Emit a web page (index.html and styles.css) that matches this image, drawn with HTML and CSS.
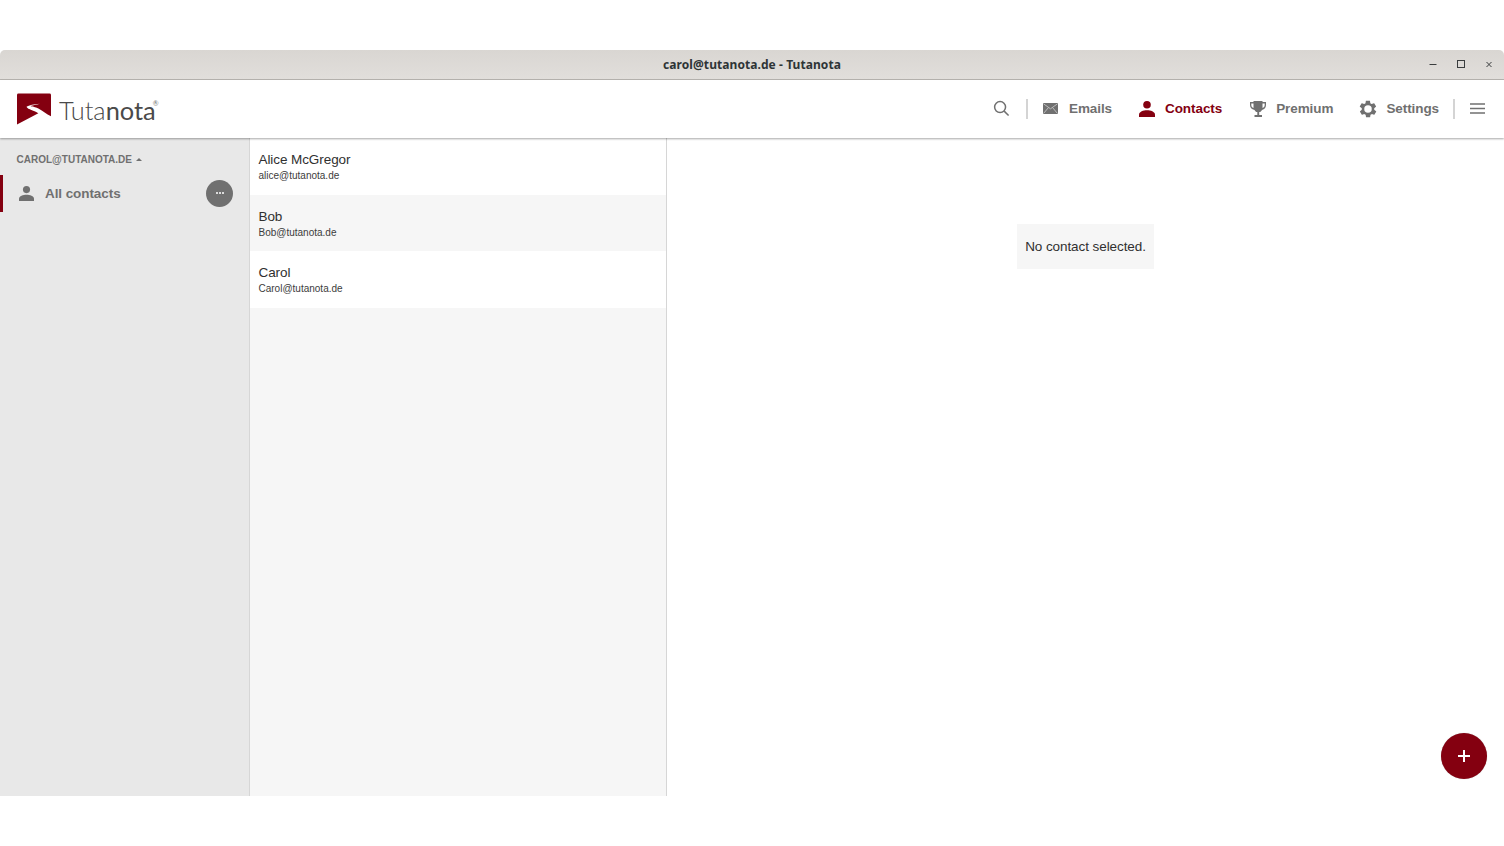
FILE: index.html
```html
<!DOCTYPE html>
<html lang="en">
<head>
<meta charset="utf-8">
<title>carol@tutanota.de - Tutanota</title>
<link rel="stylesheet" href="styles.css">
</head>
<body>
<div class="window">
  <div class="titlebar">
    <span class="title">carol@tutanota.de - Tutanota</span>
    <div class="win-controls">
      <svg class="win-icon" viewBox="0 0 10 10"><path d="M1.5 5.5h7" /></svg>
      <svg class="win-icon" viewBox="0 0 10 10"><rect x="1.5" y="1.5" width="7" height="7" /></svg>
      <svg class="win-icon" viewBox="0 0 10 10"><path d="M2.5 3l5 5M7.5 3l-5 5" /></svg>
    </div>
  </div>
  <header class="topbar">
    <div class="logo">
      <svg class="logo-mark" viewBox="0 0 35 32">
        <path d="M0 1.500Q0 0 1.500 0H33.500Q35 0 35 1.500V23.500C30 21 27 18 22 15.500C19 14 15 13.500 14 13C16 12 20 11.500 23.500 10.500C18 11 12 12 10 13.500C9.500 15 13 16.500 16 17.500C19 18.500 21 19.500 22 20.500L0 32Z"/>
      </svg>
      <span class="wordmark"><span class="wm-light">Tuta</span>nota<sup class="wm-reg">®</sup></span>
    </div>
    <nav class="nav">
      <svg class="ic-search" viewBox="0 0 18 18"><circle cx="7.500" cy="7.500" r="5.800"/><path d="M11.800 11.800L16.500 16.500"/></svg>
      <span class="divider first"></span>
      <a class="nav-item n-emails"><svg class="mail-ic" viewBox="0 0 15 11"><rect class="env-fill" width="15" height="11" rx="0.500"/><path class="env-line" d="M0.500 0.800L7.500 5.800L14.500 0.800M0.500 10.500L5.500 4.500M14.500 10.500L9.500 4.500"/></svg>Emails</a>
      <a class="nav-item n-contacts active"><svg class="nav-ic person" viewBox="0 0 16 16"><circle cx="8" cy="3.800" r="3.800"/><path d="M0 16v-2.600C0 10.700 4.500 9.200 8 9.200s8 1.500 8 4.200V16z"/></svg>Contacts</a>
      <a class="nav-item n-premium"><svg class="nav-ic trophy" viewBox="0 0 16 16"><path d="M3.500 0h9v1h3.500v3c0 2.600-1.500 4.400-4 4.900-.6 1.200-1.500 1.900-2.800 2.200V14h2.800v2H4.500v-2h2.800v-2.900c-1.300-.3-2.200-1-2.800-2.200C1.500 8.400 0 6.600 0 4V1h3.500zM1.300 2.400V4c0 1.400.8 2.600 2.200 3.100V2.400zM14.700 2.400h-2.200v4.700c1.400-.5 2.200-1.700 2.200-3.100z" fill-rule="evenodd"/></svg>Premium</a>
      <a class="nav-item n-settings"><svg class="nav-ic gear" viewBox="0 0 24 24"><path d="M19.400 13c.1-.3.100-.7.100-1s0-.7-.1-1l2.100-1.600c.2-.2.200-.4.100-.6l-2-3.500c-.1-.2-.4-.3-.6-.2l-2.500 1c-.5-.4-1.100-.7-1.700-1l-.4-2.700c0-.2-.2-.4-.5-.4h-4c-.3 0-.5.200-.5.400l-.4 2.700c-.6.300-1.200.6-1.700 1l-2.500-1c-.2-.1-.5 0-.6.200l-2 3.500c-.1.200-.1.400.1.600L4.600 11c0 .3-.1.700-.1 1s0 .7.100 1l-2.100 1.600c-.2.200-.2.400-.1.600l2 3.500c.1.200.4.300.6.200l2.500-1c.5.400 1.100.7 1.700 1l.4 2.700c0 .2.200.4.500.4h4c.3 0 .5-.2.500-.4l.4-2.700c.6-.3 1.200-.6 1.700-1l2.500 1c.2.100.5 0 .6-.2l2-3.500c.1-.2.100-.4-.1-.6zM12 16.500a4.500 4.500 0 1 1 0-9 4.500 4.500 0 0 1 0 9z" fill-rule="evenodd"/></svg>Settings</a>
      <span class="divider second"></span>
      <svg class="ic-menu" viewBox="0 0 15 11"><path d="M0 1h15M0 5.500h15M0 10h15"/></svg>
    </nav>
  </header>
  <main class="content">
    <aside class="folders">
      <div class="account">CAROL@TUTANOTA.DE<span class="caret"></span></div>
      <div class="folder-row">
        <svg class="folder-ic" viewBox="0 0 16 16"><circle cx="8" cy="3.800" r="3.800"/><path d="M0 16v-2.600C0 10.700 4.500 9.200 8 9.200s8 1.500 8 4.200V16z"/></svg>
        <span class="folder-label">All contacts</span>
        <span class="more"><i></i><i></i><i></i></span>
      </div>
    </aside>
    <section class="list">
      <div class="row">
        <div class="name">Alice McGregor</div>
        <div class="mail">alice@tutanota.de</div>
      </div>
      <div class="row">
        <div class="name">Bob</div>
        <div class="mail">Bob@tutanota.de</div>
      </div>
      <div class="row">
        <div class="name">Carol</div>
        <div class="mail">Carol@tutanota.de</div>
      </div>
    </section>
    <section class="detail">
      <div class="empty">No contact selected.</div>
      <button class="fab" aria-label="New contact"><svg viewBox="0 0 14 14"><path d="M7 1v12M1 7h12"/></svg></button>
    </section>
  </main>
</div>
</body>
</html>
```
FILE: styles.css
```css
* { box-sizing: border-box; }
html, body { margin: 0; height: 100%; background: #fff; }
body { padding: 50px 0; font-family: "Liberation Sans", Arial, sans-serif; overflow: hidden; }
.window { height: 746px; display: flex; flex-direction: column; background: #fff; }

.titlebar {
  height: 30px; flex: none; position: relative;
  display: flex; align-items: center; justify-content: center;
  background: linear-gradient(#d9d6d2, #e1dedb);
  border-bottom: 1px solid #b8b5b1;
  border-radius: 5px 5px 0 0;
}
.title { font-family: "Noto Sans", "Open Sans", sans-serif; font-weight: 700; font-size: 12px; color: #2e3436; letter-spacing: 0.07px; }
.win-controls { position: absolute; right: 10px; top: 9px; display: flex; gap: 18px; }
.win-icon { width: 10px; height: 10px; fill: none; stroke: #3a3d3e; stroke-width: 1; }

.topbar {
  height: 58px; flex: none; position: relative; z-index: 2;
  display: flex; align-items: center; justify-content: space-between;
  background: #fff; box-shadow: 0 1px 2px rgba(0,0,0,.35);
  padding: 0 19px 0 17px;
}
.logo { display: flex; align-items: center; gap: 8px; }
.logo-mark { width: 34px; height: 32px; fill: #840010; }
.wordmark { font-family: Lato, sans-serif; font-size: 25.4px; font-weight: 400; color: #4a4a4a; line-height: 32px; position: relative; top: 1px; }
.wm-light { font-weight: 300; }
.wm-reg { font-size: 7px; position: relative; top: -5px; margin-left: -3px; vertical-align: super; line-height: 0; color: #777; }

.nav { display: flex; align-items: center; padding-bottom: 1px; }
.nav-item { display: flex; align-items: center; gap: 10px; font-size: 13.5px; letter-spacing: -0.08px; font-weight: 700; color: #707070; }
.nav-item.active { color: #840010; }
.nav-ic { fill: #707070; width: 16px; height: 16px; }
.active .nav-ic { fill: #840010; }
.mail-ic { width: 15px; height: 11px; margin-right: 1px; }
.env-fill { fill: #707070; }
.env-line { fill: none; stroke: #c4c4c4; stroke-width: 0.9; }
.ic-search { width: 17px; height: 17px; fill: none; stroke: #707070; stroke-width: 1.6; }
.divider { width: 2px; height: 20px; background: #d4d4d4; }
.divider.first { margin: 0 15px 0 16px; }
.divider.second { margin: 0 15px 0 14px; }
.n-contacts { margin-left: 27px; }
.n-premium { margin-left: 28px; }
.n-settings { margin-left: 27px; }
.ic-menu { width: 15px; height: 11px; fill: none; stroke: #707070; stroke-width: 1.500; }
.gear { width: 20px; height: 20px; margin: 0 -2px; }

.content { flex: 1; display: flex; min-height: 0; }
.folders { width: 250px; flex: none; background: #e8e8e8; border-right: 1px solid #d6d6d6; padding-top: 15px; }
.account { display: flex; align-items: center; height: 12px; padding-left: 16.500px; font-size: 10px; font-weight: 700; color: #707070; }
.caret { width: 0; height: 0; margin-left: 4px; border: 3.500px solid transparent; border-top: 0; border-bottom: 3.500px solid #707070; }
.folder-row { display: flex; align-items: center; height: 37px; margin-top: 10px; padding: 0 16px 1px 16px; border-left: 3px solid #840010; }
.folder-ic { width: 15px; height: 15px; fill: #707070; margin-right: 11px; }
.folder-label { flex: 1; font-size: 13.5px; letter-spacing: -0.08px; font-weight: 700; color: #707070; }
.more { width: 27px; height: 27px; border-radius: 50%; background: #707070; display: flex; align-items: center; justify-content: center; gap: 1px; }
.more i { width: 2px; height: 2px; border-radius: 50%; background: #fff; }

.list { width: 417px; flex: none; background: #f6f6f6; border-right: 1px solid #d6d6d6; }
.row { height: 56.500px; padding: 14px 0 0 8.500px; background: #f6f6f6; }
.row:nth-child(odd) { background: #fff; }
.name { font-size: 13.5px; letter-spacing: -0.08px; line-height: 15px; color: #303030; }
.mail { font-size: 10px; line-height: 12px; margin-top: 3px; color: #3c3c3c; }

.detail { flex: 1; position: relative; display: flex; justify-content: center; padding-top: 86px; background: #fff; }
.empty { height: 45px; padding: 0 8px 1px; display: flex; align-items: center; background: #f6f6f6; font-size: 13.5px; letter-spacing: -0.08px; color: #303030; }
.fab { position: absolute; right: 17px; bottom: 17px; width: 46px; height: 46px; border: 0; padding: 0; border-radius: 50%; background: #840010; display: flex; align-items: center; justify-content: center; box-shadow: 0 0 1px rgba(0,0,0,.3); }
.fab svg { width: 14px; height: 14px; fill: none; stroke: #fff; stroke-width: 2; }
```
